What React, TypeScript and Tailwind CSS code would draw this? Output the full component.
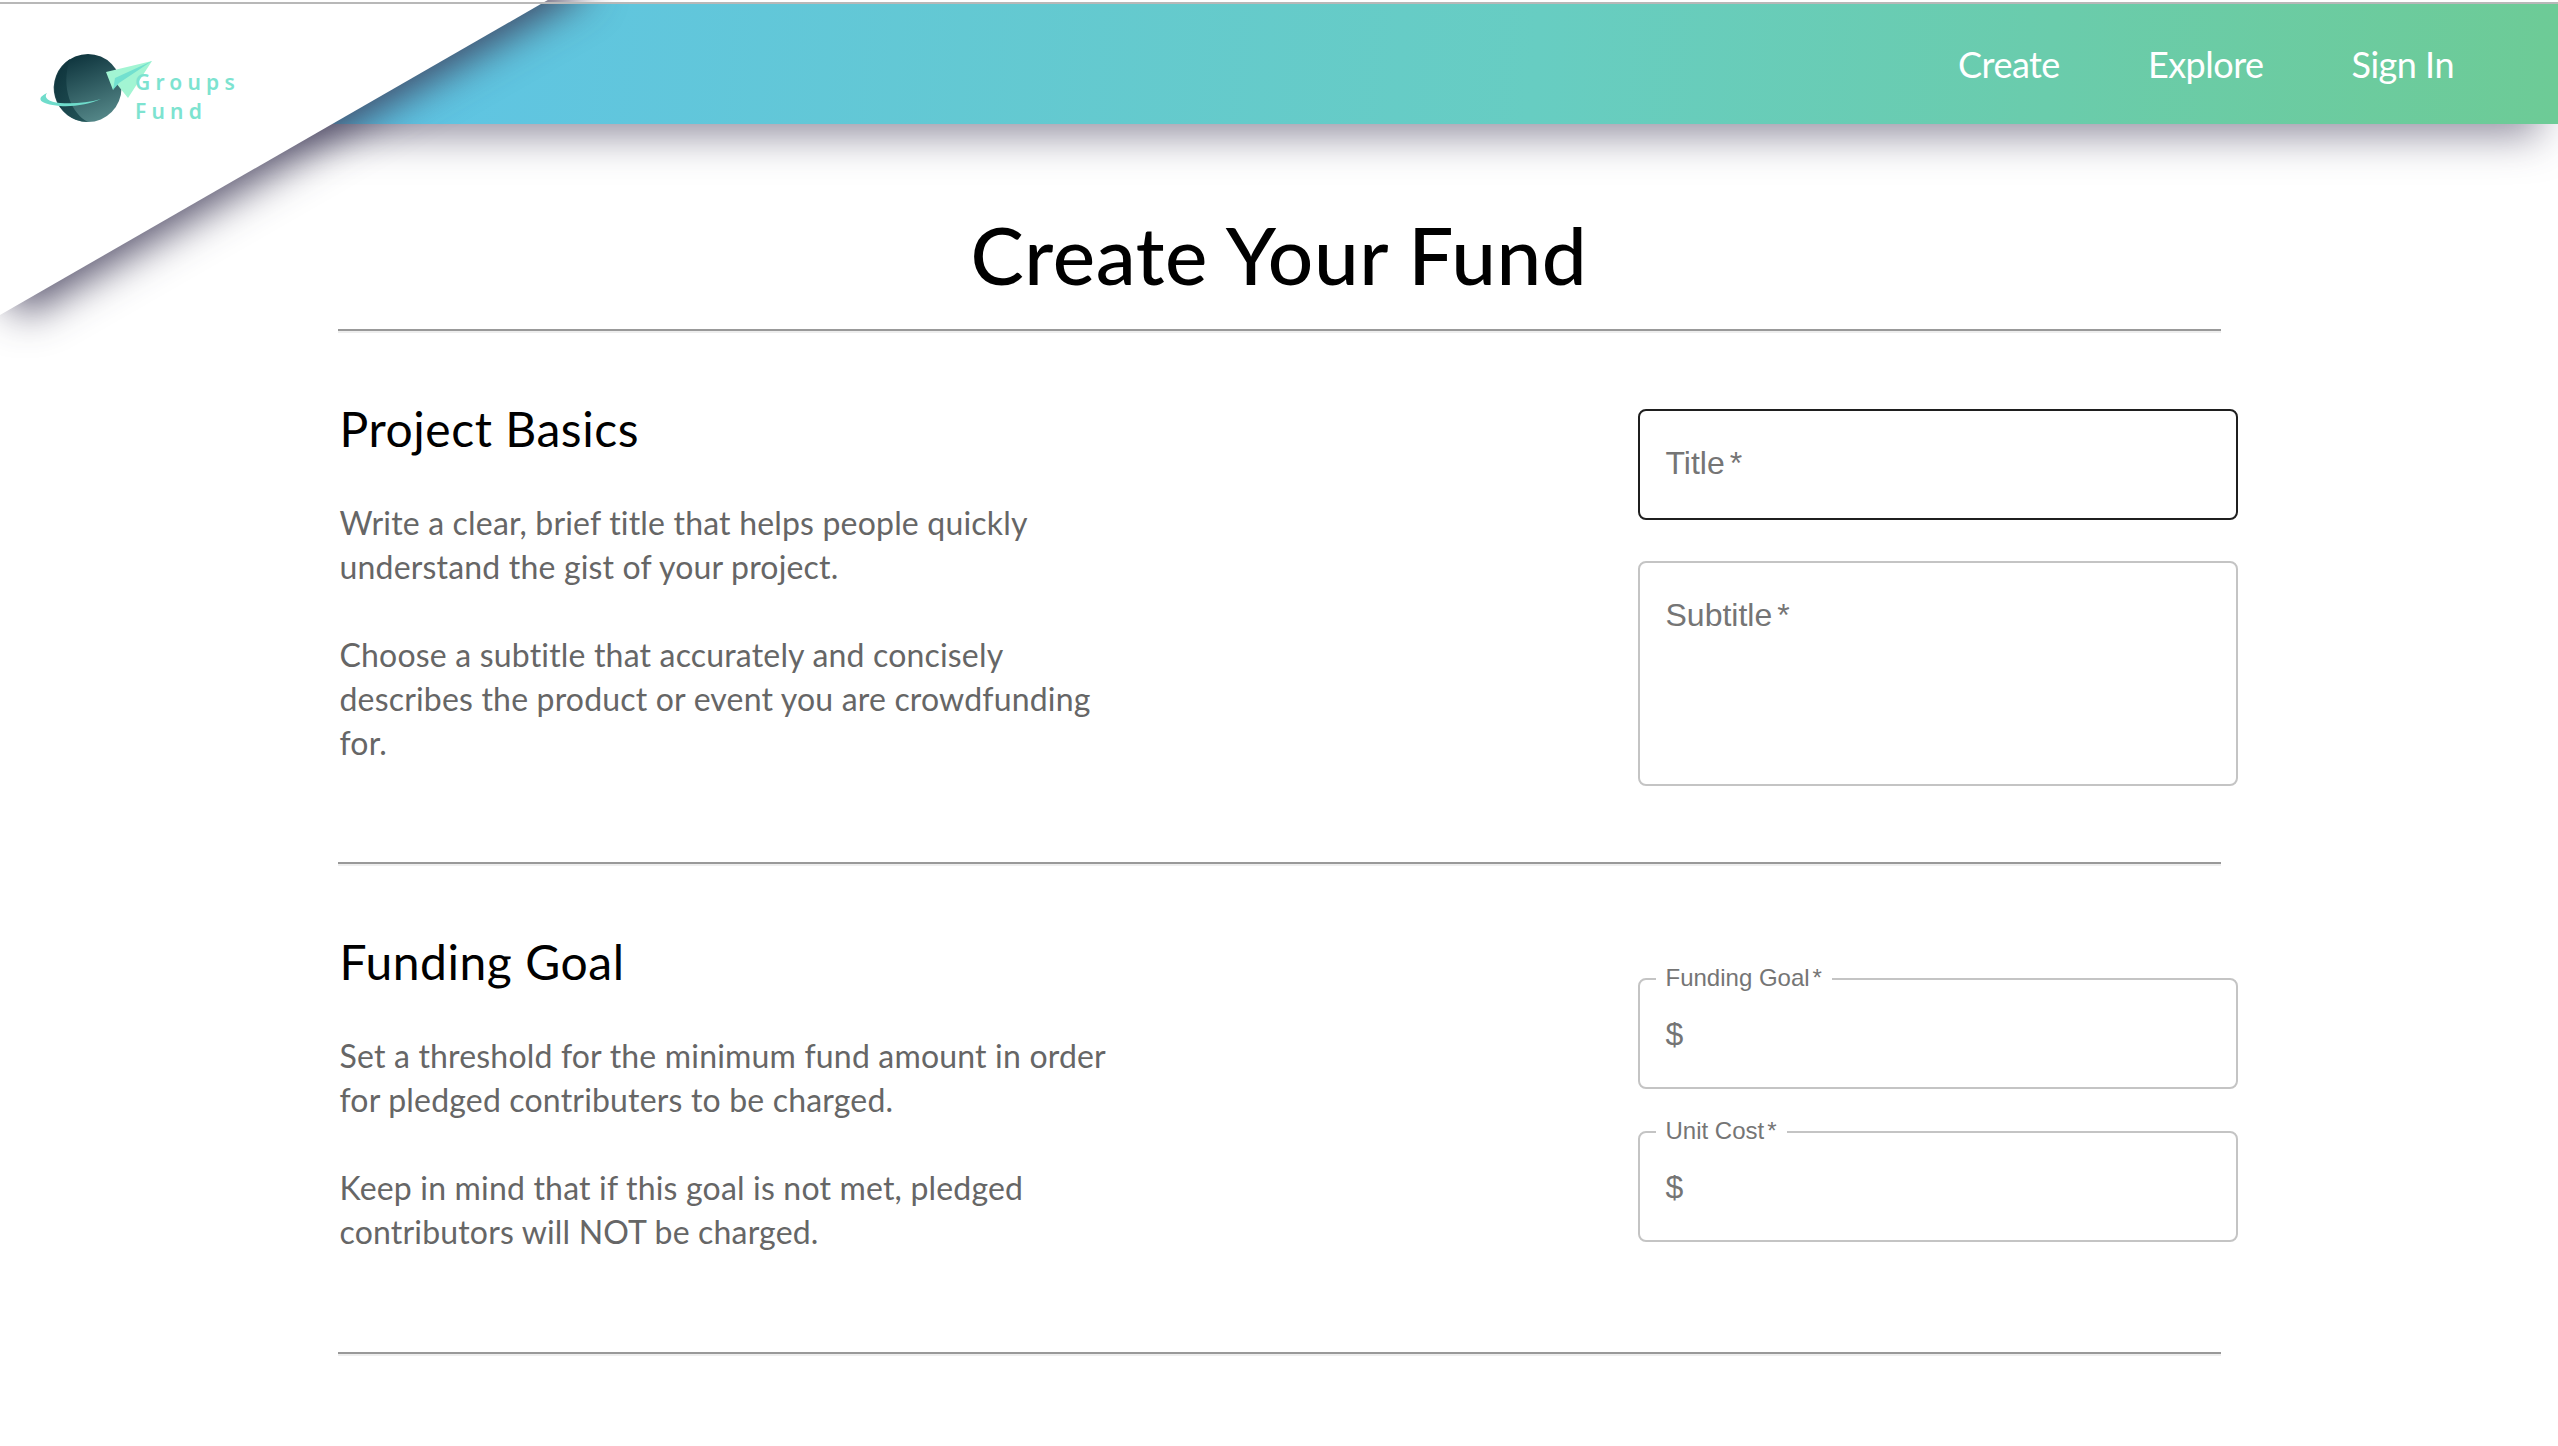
const body = "font-['Lato',sans-serif]";

function Logo() {
  return (
    <svg className="absolute left-[30px] top-[45px]" width="130" height="80" viewBox="30 45 130 80">
      <defs>
        <linearGradient id="globe" x1="0.35" y1="0" x2="0.7" y2="1">
          <stop offset="0" stopColor="#0e343d" />
          <stop offset="1" stopColor="#56898a" />
        </linearGradient>
        <linearGradient id="inner" x1="0" y1="0" x2="1" y2="1">
          <stop offset="0" stopColor="#0c2f38" />
          <stop offset="1" stopColor="#1f5155" />
        </linearGradient>
      </defs>
      <ellipse cx="88" cy="88" rx="33.5" ry="34" fill="url(#globe)" />
      <path d="M70 59 A34 34 0 0 0 88 122 C72 114 60 88 70 59 Z" fill="url(#inner)" opacity="0.9" />
      <path d="M47 93 C36 98 38 104 60 106 C74 107 90 104 101 99 C88 103 72 104 60 103 C49 102 43 98 47 93 Z" fill="#6fdccb" />
      <path d="M152 61 L106 72 L113 90 L116 83 L128 98 Z" fill="#a2f5d3" />
      <path d="M152 61 L115 78 L113 90 L119 83 Z" fill="#72e0cf" />
    </svg>
  );
}

function Outlined({ label, focused, h }: { label: string; focused?: boolean; h: string }) {
  return (
    <div
      className={`${h} w-full rounded-lg border-2 bg-white px-[26px] pt-[30px] text-[32px] leading-[44px] text-[#757575] font-['Liberation_Sans',sans-serif] ${
        focused ? "border-[#1f1f1f]" : "border-[#c4c4c4]"
      }`}
    >
      {label}
      <span className="ml-[5px]">*</span>
    </div>
  );
}

function Shrunk({ label }: { label: string }) {
  return (
    <div className="relative h-[111px] w-full rounded-lg border-2 border-[#c4c4c4] bg-white px-[26px] pt-[32px] text-[32px] leading-[44px] text-[#757575] font-['Liberation_Sans',sans-serif]">
      <span className="absolute left-[16px] top-[-18px] bg-white px-[10px] text-[24px] leading-[32px]">
        {label}
        <span className="ml-[3px]">*</span>
      </span>
      $
    </div>
  );
}

function Copy({ title, paragraphs }: { title: string; paragraphs: string[][] }) {
  return (
    <div className="w-[800px]">
      <h2 className="text-[48px] leading-[60px] tracking-[0.55px] text-black">{title}</h2>
      <div className="mt-[42px] flex flex-col gap-[44px] text-[32px] leading-[44px] tracking-[0.18px] text-[#666666]">
        {paragraphs.map((p) => (
          <p key={p[0]}>
            {p.map((line) => (
              <span key={line} className="block whitespace-nowrap">
                {line}
              </span>
            ))}
          </p>
        ))}
      </div>
    </div>
  );
}

function Rule() {
  return <div className="h-[4px] w-full border-t-2 border-[#999999] bg-[#eeeeee]" />;
}

export default function App() {
  return (
    <div className={`relative h-[1446px] w-full overflow-hidden bg-white ${body}`}>
      <div className="h-[2px] bg-white" />
      <div className="relative z-20 h-[2px] bg-[#b8b8b8]" />
      <header className="flex h-[120px] items-center justify-end gap-[88px] bg-[linear-gradient(95deg,#5ec3e8_10%,#67cdc2_60%,#6dcb96_100%)] pr-[104px] text-[36px] tracking-[-0.5px] text-white shadow-[0_30px_40px_-18px_rgba(60,55,85,0.55)]">
        <span>Create</span>
        <span>Explore</span>
        <span>Sign In</span>
      </header>

      <div className="absolute left-0 top-[-85px] z-10 h-[400px] w-[690px] origin-bottom-left rotate-[-29.9deg] bg-white shadow-[0_30px_40px_-18px_rgba(60,55,85,0.85)]" />
      <div className="absolute left-0 top-0 z-10">
        <Logo />
        <div className="absolute left-[135px] top-[68px] text-[21px] leading-[29px] font-semibold tracking-[5.2px] text-[#7de3d0] font-['Noto_Sans',sans-serif]">
          <div>Groups</div>
          <div>Fund</div>
        </div>
      </div>

      <main className="mx-auto w-[1883px]">
        <h1 className="mt-[80px] text-center text-[80px] leading-[100px] font-medium tracking-[0.6px] text-black">Create Your Fund</h1>
        <div className="mt-[25px]">
          <Rule />
        </div>

        <section className="flex h-[529px] justify-between pl-[2px] pt-[66px]">
          <Copy
            title="Project Basics"
            paragraphs={[
              ["Write a clear, brief title that helps people quickly", "understand the gist of your project."],
              [
                "Choose a subtitle that accurately and concisely",
                "describes the product or event you are crowdfunding",
                "for.",
              ],
            ]}
          />
          <div className="mr-[-17px] flex w-[600px] flex-col gap-[41px] pt-[10px]">
            <Outlined label="Title" focused h="h-[111px]" />
            <Outlined label="Subtitle" h="h-[225px]" />
          </div>
        </section>
        <Rule />

        <section className="flex h-[486px] justify-between pl-[2px] pt-[66px]">
          <Copy
            title="Funding Goal"
            paragraphs={[
              ["Set a threshold for the minimum fund amount in order", "for pledged contributers to be charged."],
              ["Keep in mind that if this goal is not met, pledged", "contributors will NOT be charged."],
            ]}
          />
          <div className="mr-[-17px] flex w-[600px] flex-col gap-[42px] pt-[46px]">
            <Shrunk label="Funding Goal" />
            <Shrunk label="Unit Cost" />
          </div>
        </section>
        <Rule />
      </main>
    </div>
  );
}
